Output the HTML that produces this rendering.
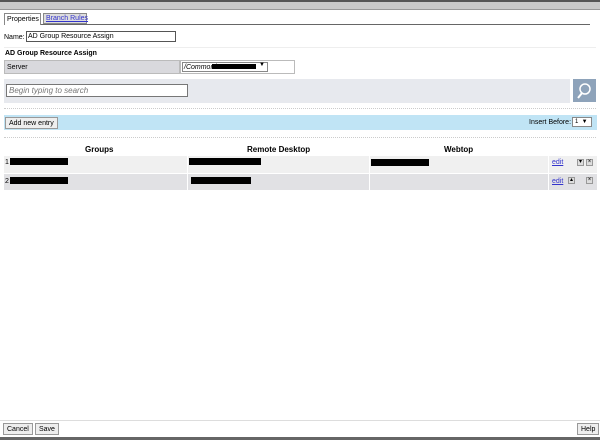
<!DOCTYPE html>
<html><head><style>
body{margin:0;width:600px;height:440px;position:relative;background:#fff;font-family:"Liberation Sans",sans-serif;font-size:7px;color:#000;overflow:hidden}
div,span{position:absolute;box-sizing:border-box;white-space:nowrap}
.blk{background:#000}
.btn{border:1px solid #999;background:#eee;font-size:7px;line-height:11px;padding:0 3px;height:12px}
.ic{width:7px;height:7px;border:1px solid #999;background:#ddd;font-size:6px;line-height:5px;text-align:center}
</style></head><body>
<div style="left:0;top:0;width:600px;height:10px;background:#c9c9c9;border-top:2px solid #555;border-bottom:1px solid #999"></div>
<div style="left:4px;top:24px;width:586px;height:1px;background:#666"></div>
<div style="left:4px;top:13px;width:37px;height:12px;border:1px solid #888;border-bottom:none;background:#fff;padding:2px 2px">Properties</div>
<div style="left:43px;top:13px;width:44px;height:11px;border:1px solid #888;background:#ddd;padding:1px 2px;color:#33c;text-decoration:underline">Branch Rules</div>
<div style="left:4px;top:34px">Name:</div>
<div style="left:26px;top:31px;width:150px;height:11px;border:1px solid #555;padding:0 1px;line-height:10px">AD Group Resource Assign</div>
<div style="left:4px;top:47px;width:592px;height:1px;background:#eee"></div>
<div style="left:5px;top:50px;font-weight:bold">AD Group Resource Assign</div>
<div style="left:4px;top:60px;width:176px;height:14px;background:#d9d9dd;border:1px solid #bbb;padding:3px 2px">Server</div>
<div style="left:180px;top:60px;width:115px;height:14px;background:#fff;border:1px solid #bbb"></div>
<div style="left:182px;top:62px;width:86px;height:10px;border:1px solid #888;font-style:italic;padding:0 1px;line-height:9px">/Common/</div>
<div class="blk" style="left:212px;top:64px;width:44px;height:5px"></div>
<div style="left:259px;top:62px;font-size:6px">▼</div>
<div style="left:4px;top:79px;width:566px;height:24px;background:#e7e9ee"></div>
<div style="left:6px;top:84px;width:182px;height:13px;background:#fff;border:1px solid #777;padding:1px 2px;color:#777;font-style:italic;font-size:8px">Begin typing to search</div>
<div style="left:573px;top:79px;width:23px;height:23px;background:#8ea3ba"><svg width="23" height="23"><circle cx="12" cy="10" r="5" fill="none" stroke="#fff" stroke-width="1.5"/><line x1="9" y1="14" x2="5" y2="19" stroke="#fff" stroke-width="2"/></svg></div>
<div style="left:4px;top:108px;width:592px;border-top:1px dotted #ccc"></div>
<div style="left:4px;top:115px;width:593px;height:15px;background:#c0e4f5"></div>
<div class="btn" style="left:5px;top:117px">Add new entry</div>
<div style="left:529px;top:119px">Insert Before:</div>
<div style="left:572px;top:117px;width:20px;height:10px;border:1px solid #888;background:#fff;font-size:6px;padding:0 2px;line-height:9px">1 &nbsp;▼</div>
<div style="left:4px;top:137px;width:592px;border-top:1px dotted #ccc"></div>
<div style="left:85px;top:145px;font-weight:bold;font-size:8px">Groups</div>
<div style="left:247px;top:145px;font-weight:bold;font-size:8px">Remote Desktop</div>
<div style="left:444px;top:145px;font-weight:bold;font-size:8px">Webtop</div>
<div style="left:4px;top:156px;width:593px;height:17px;background:#f0f0f0"></div>
<div style="left:4px;top:174px;width:593px;height:16px;background:#e1e1e4"></div>
<div style="left:187px;top:156px;width:1px;height:34px;background:#fff"></div>
<div style="left:369px;top:156px;width:1px;height:34px;background:#fff"></div>
<div style="left:548px;top:156px;width:1px;height:34px;background:#fff"></div>
<div style="left:5px;top:159px">1</div>
<div style="left:5px;top:178px">2</div>
<div class="blk" style="left:10px;top:158px;width:58px;height:7px"></div>
<div class="blk" style="left:10px;top:177px;width:58px;height:7px"></div>
<div class="blk" style="left:189px;top:158px;width:72px;height:7px"></div>
<div class="blk" style="left:191px;top:177px;width:60px;height:7px"></div>
<div class="blk" style="left:371px;top:159px;width:58px;height:7px"></div>
<div style="left:552px;top:159px;color:#33c;text-decoration:underline">edit</div>
<div style="left:552px;top:178px;color:#33c;text-decoration:underline">edit</div>
<div class="ic" style="left:577px;top:159px">▾</div>
<div class="ic" style="left:586px;top:159px">×</div>
<div class="ic" style="left:568px;top:177px">▴</div>
<div class="ic" style="left:586px;top:177px">×</div>
<div style="left:0;top:420px;width:600px;height:1px;background:#ddd"></div>
<div class="btn" style="left:3px;top:423px">Cancel</div>
<div class="btn" style="left:35px;top:423px">Save</div>
<div class="btn" style="left:577px;top:423px">Help</div>
<div style="left:0;top:437px;width:600px;height:3px;background:#666"></div>
</body></html>
